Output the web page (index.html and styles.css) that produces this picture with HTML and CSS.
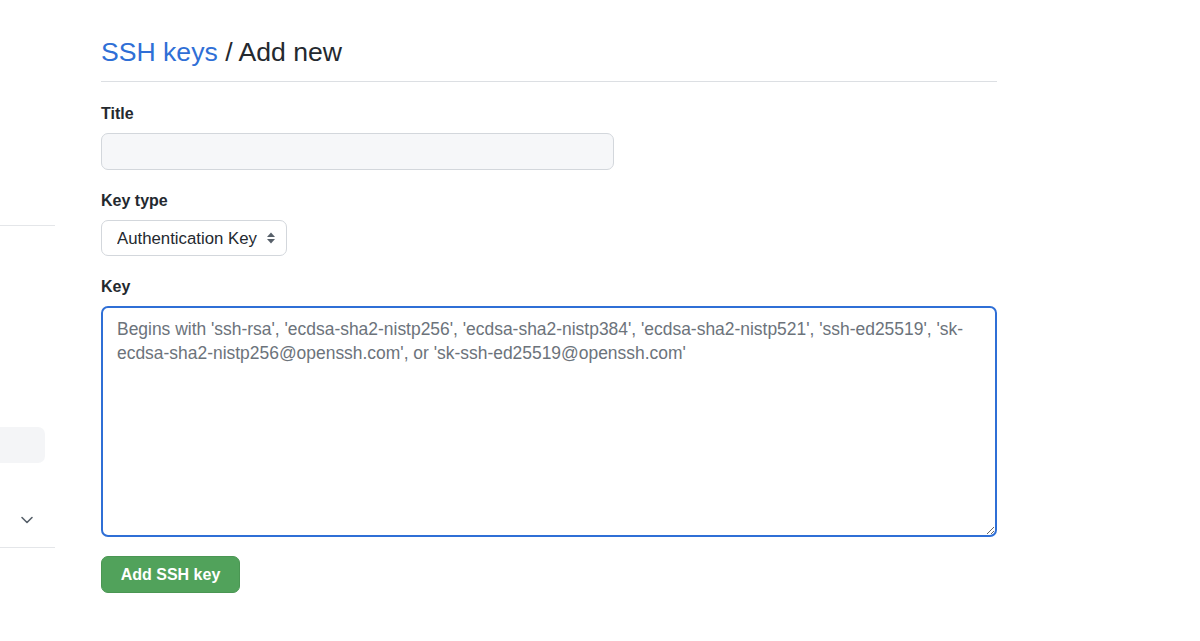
FILE: index.html
```html
<!DOCTYPE html>
<html lang="en">
<head>
<meta charset="utf-8">
<title>SSH keys / Add new</title>
<link rel="stylesheet" href="styles.css">
</head>
<body>
<div class="layout">
  <aside class="sidebar">
    <div class="side-top"></div>
    <div class="side-line"></div>
    <div class="side-gap1"></div>
    <div class="side-pill"></div>
    <div class="side-chevron-row">
      <svg class="chevron" width="14" height="10" viewBox="0 0 14 10" aria-hidden="true"><path d="M2 2.5 L7 7.5 L12 2.5" fill="none" stroke="#57606a" stroke-width="1.6" stroke-linecap="round" stroke-linejoin="round"/></svg>
    </div>
    <div class="side-line"></div>
  </aside>
  <main class="main">
    <h2 class="subhead"><a class="crumb" href="#">SSH keys</a> / Add new</h2>
    <form class="form">
      <div class="group">
        <label class="label" for="title">Title</label>
        <input class="input title-input" id="title" type="text">
      </div>
      <div class="group">
        <label class="label" for="type">Key type</label>
        <div class="select-wrap">
          <select class="select" id="type">
            <option>Authentication Key</option>
            <option>Signing Key</option>
          </select>
          <svg class="select-arrows" width="10" height="14" viewBox="0 0 10 14" aria-hidden="true"><path d="M5 1.5 L9 6 L1 6 Z" fill="#57606a"/><path d="M5 12.5 L9 8 L1 8 Z" fill="#57606a"/></svg>
        </div>
      </div>
      <div class="group">
        <label class="label" for="key">Key</label>
        <textarea class="textarea" id="key" placeholder="Begins with 'ssh-rsa', 'ecdsa-sha2-nistp256', 'ecdsa-sha2-nistp384', 'ecdsa-sha2-nistp521', 'ssh-ed25519', 'sk-ecdsa-sha2-nistp256@openssh.com', or 'sk-ssh-ed25519@openssh.com'"></textarea>
      </div>
      <div class="actions">
        <button class="btn-primary" type="button">Add SSH key</button>
      </div>
    </form>
  </main>
</div>
</body>
</html>
```
FILE: styles.css
```css
* { box-sizing: border-box; }
html, body { margin: 0; padding: 0; background: #ffffff; }
body {
  font-family: "Liberation Sans", Arial, sans-serif;
  color: #24292f;
  width: 1200px;
  height: 641px;
  overflow: hidden;
}
.layout {
  display: flex;
  align-items: flex-start;
}
.sidebar {
  width: 55px;
  flex: 0 0 55px;
  display: flex;
  flex-direction: column;
}
.side-top { height: 225px; }
.side-line { height: 1px; background: #e4e6e9; }
.side-gap1 { height: 201px; }
.side-pill {
  width: 45px;
  height: 36px;
  background: #f4f5f7;
  border-radius: 0 7px 7px 0;
}
.side-chevron-row {
  height: 84px;
  display: flex;
  align-items: center;
  padding-left: 20px;
  padding-top: 30px;
}
.chevron { display: block; }
.main {
  margin-left: 46px;
  width: 896px;
  padding-top: 34px;
}
.subhead {
  margin: 0;
  font-size: 26.6px;
  font-weight: 400;
  line-height: 36px;
  padding-bottom: 11px;
  border-bottom: 1px solid #dcdfe3;
  color: #24292f;
}
.crumb { color: #2f6fd6; text-decoration: none; }
.form {
  padding-top: 20px;
  display: flex;
  flex-direction: column;
  gap: 19px;
}
.group {
  display: flex;
  flex-direction: column;
  align-items: flex-start;
  gap: 7px;
}
.label {
  font-size: 16px;
  font-weight: 700;
  line-height: 24px;
  color: #24292f;
}
.input {
  font-family: inherit;
  font-size: 16px;
  height: 37px;
  border: 1px solid #d3d7dc;
  border-radius: 7px;
  background: #f6f7f9;
  padding: 0 14px;
  outline: none;
}
.title-input { width: 513px; }
.select-wrap { position: relative; }
.select {
  -webkit-appearance: none;
  appearance: none;
  font-family: inherit;
  font-size: 16.8px;
  color: #24292f;
  height: 36px;
  width: 186px;
  padding: 0 24px 0 15px;
  border: 1px solid #d3d7dc;
  border-radius: 7px;
  background: #ffffff;
  outline: none;
}
.select-arrows {
  position: absolute;
  right: 11px;
  top: 11px;
  pointer-events: none;
}
.textarea {
  font-family: inherit;
  font-size: 17.45px;
  line-height: 24px;
  width: 896px;
  height: 231px;
  padding: 9px 14px;
  border: 2px solid #2f6fd6;
  border-radius: 7px;
  background: #ffffff;
  color: #24292f;
  outline: none;
  resize: both;
}
.textarea::placeholder { color: #6c737b; opacity: 1; }
.actions { display: flex; }
.btn-primary {
  font-family: inherit;
  font-size: 16px;
  font-weight: 700;
  color: #ffffff;
  background: #51a25b;
  border: 1px solid #4a9653;
  border-radius: 7px;
  height: 37px;
  width: 139px;
  padding: 0;
  cursor: pointer;
}
```
